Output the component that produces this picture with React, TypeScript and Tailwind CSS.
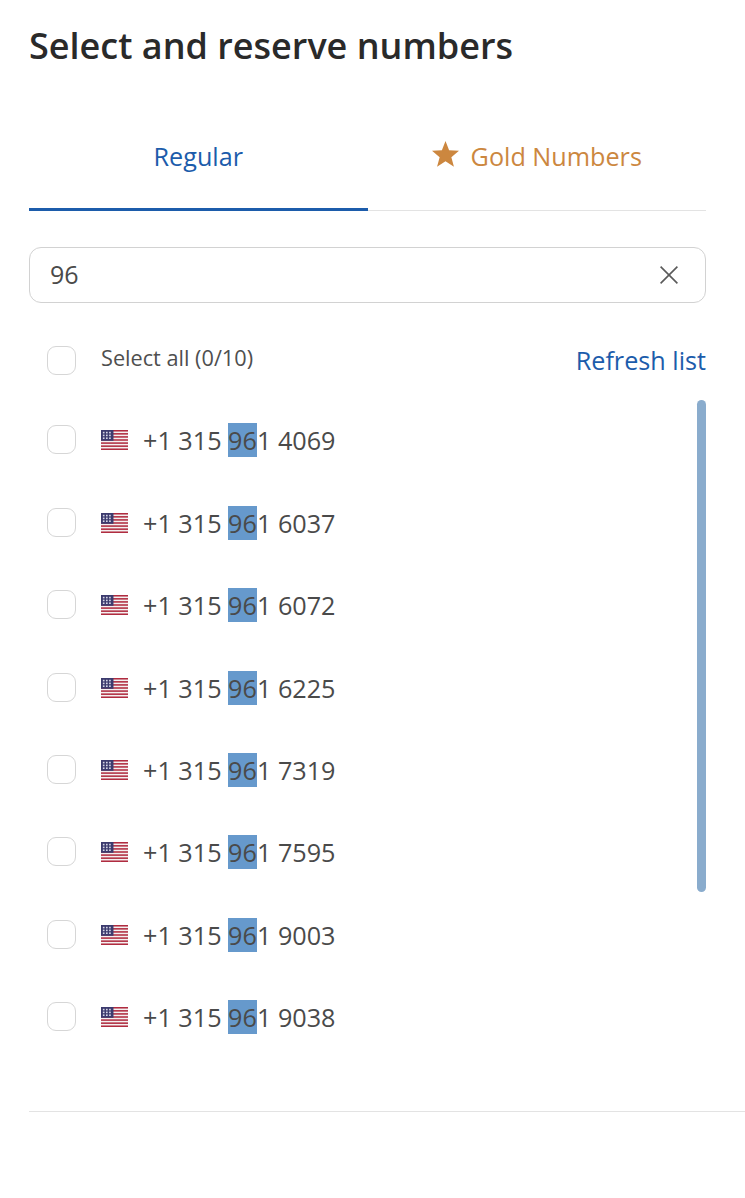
const NUMBERS = ['4069', '6037', '6072', '6225', '7319', '7595', '9003', '9038'];

function Checkbox() {
  return <span className="block size-[29px] shrink-0 rounded-[9px] border border-[#d6d6d6] bg-white" />;
}

function UsFlag() {
  const stripes = [0, 2, 4, 6, 8, 10, 12];
  return (
    <svg width="27" height="20" viewBox="0 0 13 10" preserveAspectRatio="none" className="shrink-0" aria-hidden="true">
      <rect width="13" height="10" fill="#f4f0f0" />
      {stripes.map((s) => (
        <rect key={s} y={(s * 10) / 13} width="13" height={10 / 13} fill="#b02c40" />
      ))}
      <rect width="6" height="5.4" fill="#3c3b6e" />
      {[0.9, 2.3, 3.7].map((y) =>
        [0.9, 2.4, 3.9].map((x) => <rect key={`${x}-${y}`} x={x} y={y} width="0.8" height="0.8" fill="#d5d6e6" />),
      )}
    </svg>
  );
}

function NumberRow({ last }: { last: string }) {
  return (
    <li className="flex h-[82.4px] items-center">
      <Checkbox />
      <span className="ml-[25px] flex items-center pt-px">
        <UsFlag />
      </span>
      <span className="ml-[15px] whitespace-pre pt-px text-[25.2px] leading-[34px] text-[#4a4a4a]">
        +1 315 <span className="bg-[#6699cc]">96</span>1 {last}
      </span>
    </li>
  );
}

export default function App() {
  return (
    <div className="relative h-[1198px] w-[745px] overflow-hidden bg-white font-['Open_Sans',sans-serif]">
      <div className="pl-[29px] pr-[39px] pt-[22px]">
        <h1 className="text-[36px] font-semibold leading-[48px] text-[#2a2a2a]">Select and reserve numbers</h1>

        {/* Tabs */}
        <div className="mt-[41px] flex h-[100px] border-b border-[#e3e3e3]">
          <button className="flex h-[100px] w-1/2 items-center justify-center border-b-[3px] border-[#1c5cab] pb-[6px] text-[25.2px] text-[#1c5cab]">
            Regular
          </button>
          <button className="flex h-[99px] w-1/2 items-center justify-center gap-[12px] pb-[8px] text-[25.2px] text-[#cc873f]">
            <svg width="27" height="26" viewBox="0 0 24 23" fill="currentColor" className="-mt-[5px]" aria-hidden="true">
              <path d="M12 0l3.2 8.2 8.8.5-6.8 5.6 2.3 8.6L12 18l-7.5 4.9 2.3-8.6L0 8.7l8.8-.5z" />
            </svg>
            Gold Numbers
          </button>
        </div>

        {/* Search */}
        <div className="mt-[36px] flex h-[56px] items-center justify-between rounded-[12px] border border-[#d2d2d2] pl-[20px] pr-[27px]">
          <span className="text-[25px] text-[#4a4a4a]">96</span>
          <svg width="18" height="18" viewBox="0 0 18 18" stroke="#5a5a5a" strokeWidth="1.6" fill="none" aria-hidden="true">
            <path d="M.6.6l16.8 16.8M17.4.6L.6 17.4" />
          </svg>
        </div>

        {/* Select all */}
        <div className="mt-[43px] flex h-[32px] items-start justify-between pl-[18px]">
          <label className="flex items-start">
            <Checkbox />
            <span className="ml-[25px] -mt-[1px] text-[21.7px] leading-[26px] text-[#4f4f4f]">Select all (0/10)</span>
          </label>
          <button className="-mt-[2px] text-[25.2px] leading-[32px] text-[#1c5cab]">Refresh list</button>
        </div>

        <ul className="mt-[20.7px] pl-[18px]">
          {NUMBERS.map((n) => (
            <NumberRow key={n} last={n} />
          ))}
        </ul>
      </div>

      {/* Scrollbar thumb */}
      <div className="absolute left-[697px] top-[400px] h-[492px] w-[9px] rounded-full bg-[#8aaccd]" />

      <div className="ml-[29px] mt-[53px] h-px bg-[#e3e3e3]" />
    </div>
  );
}
